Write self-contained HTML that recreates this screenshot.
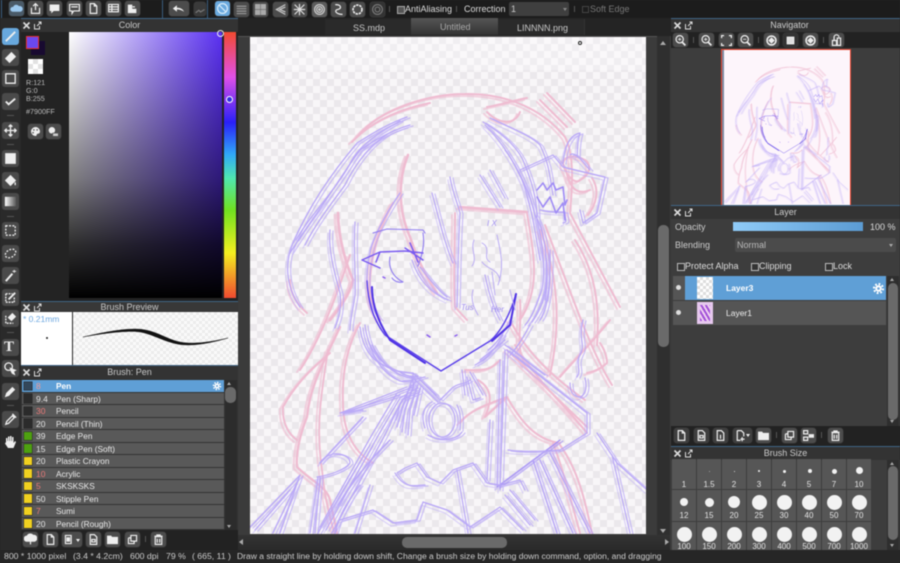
<!DOCTYPE html>
<html><head><meta charset="utf-8"><title>MediBang</title>
<style>
html,body{margin:0;padding:0;background:#262626}
#r{position:relative;width:900px;height:563px;overflow:hidden;background:#262626;font-family:"Liberation Sans",sans-serif;color:#ddd;filter:blur(.4px)}
#r div,#r span.t,#r svg.a{position:absolute}
.t{white-space:nowrap;line-height:12px;font-size:8.5px;position:absolute}
.b{width:15px;height:15px;background:#4c4c4c;border-radius:3px;box-shadow:0 0 0 .5px #3a3a3a}
.b svg{position:absolute;left:1px;top:1px;width:13px;height:13px;fill:none;stroke:#eee;stroke-width:1.5}
.tool{width:17px;height:17px;left:2px;background:#4a4a4a;border-radius:3px}
.tool svg{position:absolute;left:1px;top:1px;width:15px;height:15px;fill:none;stroke:#eee;stroke-width:1.4}
.title{height:13px;background:#333;border-top:1px solid #3f6485}
.title .c{left:0;right:0;top:0;text-align:center;font-size:9px;line-height:13px;color:#c8c8c8}
.x{top:2px;width:9px;height:9px;fill:none;stroke:#ddd;stroke-width:1.6;position:absolute}
.row{left:22px;width:202px;height:11.5px;background:#595959}
.sw{left:2px;top:1.5px;width:8px;height:8.5px;background:#2b2b2b;box-shadow:0 0 0 .5px #222}
.n{left:14px;top:0;line-height:12px;font-size:8.5px;color:#e4e4e4}
.m{left:34px;top:0;line-height:12px;font-size:8.3px;color:#e8e8e8;white-space:nowrap}
.red{color:#ea7a78}
.cell{width:24px;background:#565656}
.dot{background:#f2f2f2;border-radius:50%}
.lb{font-size:8px;line-height:10px;width:24px;text-align:center;color:#e4e4e4}
.cb{width:6px;height:6px;border:1px solid #bbb;background:#333}
</style></head><body>
<div id="r">
<svg width="0" height="0" style="position:absolute"><defs>
<symbol id="doc" viewBox="0 0 16 16"><path d="M4 2h5l3 3v9H4zM9 2v3h3"/></symbol>
<symbol id="folder" viewBox="0 0 16 16"><path d="M2 4h4l1 1.5h7V13H2z" fill="#eee"/></symbol>
<symbol id="copy" viewBox="0 0 16 16"><path d="M6 3h7v7H6zM3 6h3M3 6v7h7v-3"/></symbol>
<symbol id="trash" viewBox="0 0 16 16"><path d="M3 4h10M6 4V2.500h4V4M4 4.500h8V14H4zM6.500 7v5M9.500 7v5"/></symbol>
<symbol id="zoom" viewBox="0 0 16 16"><circle cx="7" cy="6.500" r="4.500"/><path d="M10 10l4 4" stroke-width="2.200"/><path d="M5 6.500h4M7 4.500v4" stroke-width="1"/></symbol>
<symbol id="zoomo" viewBox="0 0 16 16"><circle cx="7" cy="6.500" r="4.500"/><path d="M10 10l4 4" stroke-width="2.200"/><path d="M5 6.500h4" stroke-width="1"/></symbol>
<symbol id="rot" viewBox="0 0 16 16"><circle cx="8" cy="8" r="5.500" stroke-width="2"/><path d="M5 8l3-3 3 3-3 3z" fill="#eee"/></symbol>
<symbol id="gear" viewBox="0 0 16 16"><circle cx="8" cy="8" r="4" fill="#fff" stroke="none"/><circle cx="8" cy="8" r="5.500" fill="none" stroke="#fff" stroke-width="2.600" stroke-dasharray="2.200 2.100"/><circle cx="8" cy="8" r="1.600" fill="#6aa2d6" stroke="none"/></symbol>
<g id="pk" stroke="#efbcd1" stroke-width="2" fill="none" stroke-linecap="round" stroke-linejoin="round">
  <path d="M357 137C380 108 430 94 465 94 510 93 545 112 565 137 575 155 572 190 570 213L620 307"/>
  <path d="M352 142C375 118 405 108 430 103"/>
  <path d="M487 107C500 105 515 100 527 98M487 112C500 125 515 125 520 112"/>
  <path d="M547 93L575 122M540 100L567 127"/>
  <path d="M408 155C398 180 398 210 410 237 418 262 428 280 437 293" stroke-width="2.600"/>
  <path d="M393 203C375 235 368 270 370 295 372 310 378 315 380 320" stroke-width="2.400"/>
  <path d="M338 213C338 235 345 262 353 280 350 295 338 310 330 320" stroke-width="2.800"/>
  <path d="M290 280C290 295 298 305 307 313"/>
  <path d="M460 207L527 212" stroke-width="2.600"/>
  <path d="M455 213C455 250 453 285 455 307L467 320"/>
  <path d="M527 213C535 260 540 290 520 320"/>
  <path d="M563 163C565 175 575 185 580 180 590 175 592 165 585 160 575 155 565 155 563 163Z"/>
  <path d="M566 170C570 190 578 195 590 190M592 178C600 190 596 205 588 215"/>
  <path d="M340 327C325 360 310 385 307 417 298 440 296 455 297 467 310 480 327 487 330 500L337 533" stroke-width="2.300"/>
  <path d="M360 323C345 350 342 380 343 403 343 425 350 450 373 463"/>
  <path d="M283 407C295 385 310 370 330 353M283 407C282 425 290 435 297 440"/>
  <path d="M328 350C320 400 316 430 322 470 325 500 330 520 335 533" stroke-width="1.800"/>
  <path d="M507 350L587 427M515 345C540 385 565 405 587 433"/>
  <path d="M610 320C590 345 570 365 560 377M600 343C605 350 607 358 607 363 600 370 592 372 587 373"/>
  <path d="M553 443C565 475 572 505 580 533M560 445C578 470 585 500 592 533"/>
  <path d="M465 370C480 370 490 372 500 360M520 300C522 330 515 345 525 365" />
  <path d="M478 380C495 390 490 405 485 417L507 397M460 423C470 410 485 405 507 397"/>
  <path d="M507 397C520 420 535 440 560 443"/>
  <path d="M575 240C595 270 600 305 597 345M540 230C560 280 560 330 550 375"/>
  <path d="M510 320C525 350 550 375 585 400"/>
  <path d="M350 255C335 300 320 340 300 370M545 225C570 290 590 350 612 385"/>
</g>
<g id="pu" stroke="#b9a8f7" stroke-width="1.200" fill="none" stroke-linecap="round" stroke-linejoin="round">
  <path d="M407 117C385 125 370 135 357 143 330 175 310 205 293 243 285 262 285 285 300 307"/>
  <path d="M410 125C392 130 375 140 360 150 345 170 330 195 317 213 305 230 295 245 290 253"/>
  <path d="M400 121C380 132 360 145 352 160 340 185 310 215 296 240"/>
  <path d="M395 130C370 142 355 165 345 185 330 205 315 225 305 245"/>
  <path d="M330 230C328 250 335 275 340 293 342 310 338 320 335 328"/>
  <path d="M355 222C353 250 356 275 355 295 353 310 350 320 350 330"/>
  <path d="M400 193C385 215 372 240 370 253 365 275 365 300 380 320"/>
  <path d="M483 122C505 135 520 150 525 165 535 190 537 205 537 220 545 250 545 285 540 295 535 310 530 320 525 325"/>
  <path d="M490 118C510 128 530 135 540 145 550 165 550 180 553 195"/>
  <path d="M485 125C505 145 515 165 522 180 530 200 535 230 540 260"/>
  <path d="M505 150C520 170 530 195 535 215 545 230 550 270 545 300"/>
  <path d="M450 177C452 190 458 205 460 213 458 245 458 275 457 307"/>
  <path d="M432 193C438 215 445 245 453 263"/>
  <path d="M480 175L500 207M490 170L505 198" stroke="#bdaef7"/>
  <path d="M420 267C430 280 440 292 447 297M412 260C420 285 435 295 448 300"/>
  <path d="M520 170L553 155 563 167 605 177 597 213 583 223 580 210"/>
  <path d="M563 163C565 145 570 135 580 133 576 145 578 155 577 157M570 155C575 150 585 165 590 170"/>
  <path d="M540 210C550 212 558 212 565 212 565 220 568 222 563 223"/>
  <path d="M550 250C551 280 548 310 540 320M545 246C548 280 548 300 532 322"/>
  <path d="M485 275C488 290 492 305 500 320"/>
  <path d="M360 327C362 345 370 360 385 366 395 372 405 372 413 373M365 325C367 345 378 365 400 372 405 376 412 377 418 376"/>
  <path d="M368 340C375 362 385 375 400 381 410 382 420 378 425 377M372 345C385 370 400 378 415 378"/>
  <path d="M475 365C485 360 495 350 503 335M488 350C495 345 503 335 510 320M480 360L505 340"/>
  <path d="M250 527L300 475M255 530L290 490M273 533L297 483M280 533L300 475"/>
  <path d="M310 533L318 477M315 533L320 477"/>
  <path d="M317 477C330 475 345 470 350 463 350 455 337 452 330 455 322 458 320 463 320 463"/>
  <path d="M320 527L373 433 397 393 413 387M326 530L378 436 400 398 418 388M332 533L385 435 402 400 420 392M318 533L370 445"/>
  <path d="M338 505C360 470 375 455 390 440M320 463L363 417" stroke-width="1.500"/>
  <path d="M340 413L407 387M345 412L400 395M340 413L363 410"/>
  <path d="M413 377L403 407 397 427M415 382L405 410 402 432M418 385L410 410 408 435M412 385L400 405 396 420M420 388L414 415"/>
  <path d="M413 373L440 400M415 380L438 402M418 378L436 395M413 373L413 390"/>
  <ellipse cx="442" cy="420" rx="13" ry="17"/>
  <path d="M428 435C435 440 455 442 462 432M425 428C420 415 425 405 432 402M457 405C462 415 460 425 460 430"/>
  <path d="M467 377L473 400 480 398M462 370L465 395M470 372L483 395M440 400L452 388C460 382 465 385 470 380"/>
  <path d="M500 360L497 487M505 350L500 490M490 420L487 480"/>
  <path d="M497 487L560 440" stroke="#a591f5"/>
  <path d="M507 350L587 413" stroke-width="1.400"/>
  <path d="M587 413L587 433 560 450M560 450C535 452 520 452 508 450"/>
  <path d="M597 433L617 463 647 490M612 455L630 533"/>
  <path d="M533 460L557 533M540 460L573 533M550 453L590 533" stroke-width="1.500"/>
  <path d="M583 320C578 340 586 345 580 355 575 365 582 370 577 377"/>
  <path d="M570 383C570 395 576 397 580 397 586 395 587 387 585 378"/>
  <path d="M530 325C522 340 515 350 510 355M505 345C520 355 530 365 545 375"/>
  <path d="M397 473L405 468 417 463 427 477 440 483 453 470 473 463 487 483 500 485 520 480 525 490"/>
  <path d="M340 520L373 510 393 523 417 520 423 502 447 510 470 527 500 507 523 530"/>
  <path d="M360 485C345 505 340 515 335 533M370 485L355 533M395 473C405 490 415 485 425 485"/>
  <path d="M457 470L468 533M510 490L535 520M505 495L530 525"/>
</g>
<g id="art" fill="none" stroke-linecap="round" stroke-linejoin="round">
 <use href="#pk"/>
 <use href="#pk" transform="translate(-3 2)" opacity=".6"/>
 <use href="#pu"/>
 <use href="#pu" transform="translate(3 1)" opacity=".7"/>
 <use href="#pu" transform="translate(-2 3)" opacity=".45"/>
 <path d="M373 233L387 229 423 230 425 233M423 233C425 245 422 255 418 266" stroke="#8f7cf0" stroke-width="1.100"/>
 <path d="M362 260L380 252 405 251 423 253M362 260L380 268M380 252L376 262M405 248L423 260M410 243L418 262" stroke="#7a5cf0" stroke-width="1.500"/>
 <path d="M390 257C388 268 393 277 403 282 398 283 394 281 392 278" stroke="#8f7cf0" stroke-width="1.100"/>
 <path d="M537 190L543 183 547 190 553 183 556 190 563 187 565 205 567 200M537 197L543 207 550 197 556 213 563 203 565 220" stroke-width="1.600" stroke="#9f8bf5"/>
 <path d="M367 281C368 300 372 318 385 335L441 371 490 341C500 333 510 315 516 294" stroke="#5a40ea" stroke-width="1.400"/>
 <path d="M372 287C372 305 378 322 390 340L425 363M516 294L510 325 492 341" stroke="#4f33e4" stroke-width="2"/>
 <path d="M427 335L430 337M455 336L457 335M383 277l2 1" stroke="#8a5cf0" stroke-width="1.500"/>
 <g fill="#a08ef0" stroke="none" font-family="Liberation Sans, sans-serif" font-style="italic" font-size="8"><text x="487" y="226">I X</text><text x="461" y="310">Tus</text><text x="491" y="312">Her</text></g>
 <path d="M474 240C470 250 478 258 472 266M482 243C492 248 482 258 490 262M497 235C500 250 505 265 498 285M482 262C488 270 497 268 500 280M492 272L495 295M510 290L515 310M473 290C470 300 475 310 478 315" stroke="#b6a6f5" stroke-width=".9"/>
</g>
</defs></svg>

<!-- top toolbar -->
<div style="left:0;top:0;width:900px;height:18px;background:#1c1c1c"></div>
<div style="left:1px;top:0;width:1px;height:18px;background:#3a5c7c"></div>
<div style="left:162px;top:0;width:1px;height:18px;background:#3a5c7c"></div>
<div style="left:207px;top:0;width:1px;height:18px;background:#3a5c7c"></div>
<div class="b" style="left:9px;top:1px;background:#4a5a68"><svg viewBox="0 0 16 16"><path d="M3 12a3 3 0 0 1 1-6 4 4 0 0 1 7-1 3.500 3.500 0 0 1 2 7z" fill="#9cc8ee" stroke="none"/></svg></div>
<div class="b" style="left:28px;top:1px"><svg viewBox="0 0 16 16"><path d="M3 7v7h10V7M8 10V2M5 5l3-3 3 3"/></svg></div>
<div class="b" style="left:47px;top:1px"><svg viewBox="0 0 16 16"><path d="M2 3h12v8H7l-3 3v-3H2z" fill="#eee" stroke="none"/></svg></div>
<div class="b" style="left:67px;top:1px"><svg viewBox="0 0 16 16"><path d="M2 3h12v8H7l-2 3v-3H2zM4 6h8" /></svg></div>
<div class="b" style="left:86px;top:1px"><svg><use href="#doc"/></svg></div>
<div class="b" style="left:106px;top:1px"><svg viewBox="0 0 16 16"><path d="M2 3h12v9H2zM2 6h12M6 3v9M2 9h12"/></svg></div>
<div class="b" style="left:125px;top:1px"><svg viewBox="0 0 16 16"><path d="M3 4h4v4H3zM3 9h4v4H3zM8 9h4v4H8zM8 6h3" fill="#eee"/></svg></div>
<div class="b" style="left:169px;top:1px;width:20px"><svg viewBox="0 0 16 16" style="left:3px"><path d="M15 12C13 8 10 7 6 7V4L1 8l5 4V9c3 0 6 1 9 3z" fill="#eee" stroke="none"/></svg></div>
<div class="b" style="left:194px;top:2px;width:12px;height:14px;background:#3a3a3a"><svg viewBox="0 0 16 16" style="left:0;stroke:#777"><path d="M2 12l4-3 2 2 5-3"/></svg></div>
<div class="b" style="left:215px;top:1px;background:#6aa9de"><svg viewBox="0 0 16 16" style="stroke:#d8ecfa"><circle cx="8" cy="8" r="6"/><path d="M4 4l8 8"/></svg></div>
<div class="b" style="left:234px;top:2px"><svg viewBox="0 0 16 16" style="stroke:#999"><path d="M2 4h12M2 7h12M2 10h12M2 13h12"/></svg></div>
<div class="b" style="left:253px;top:2px"><svg viewBox="0 0 16 16" style="stroke:#aaa"><path d="M2 2h5v5H2zM9 2h5v5H9zM2 9h5v5H2zM9 9h5v5H9z" fill="#aaa"/></svg></div>
<div class="b" style="left:273px;top:2px"><svg viewBox="0 0 16 16" style="stroke:#ccc"><path d="M14 2L3 8l11 6M14 5L7 8l7 3"/></svg></div>
<div class="b" style="left:292px;top:2px"><svg viewBox="0 0 16 16" style="stroke:#ddd"><path d="M2 2l12 12M14 2L2 14M8 1v14M1 8h14"/></svg></div>
<div class="b" style="left:312px;top:2px;background:#5c5c5c"><svg viewBox="0 0 16 16" style="stroke:#ccc"><circle cx="8" cy="8" r="6"/><circle cx="8" cy="8" r="3.500"/><circle cx="8" cy="8" r="1"/></svg></div>
<div class="b" style="left:331px;top:2px"><svg viewBox="0 0 16 16"><path d="M4 2c8 0 8 5 3 6s-2 6 6 6" /></svg></div>
<div class="b" style="left:350px;top:2px"><svg viewBox="0 0 16 16" stroke-dasharray="3 1"><circle cx="8" cy="8" r="5.500" stroke-width="2"/></svg></div>
<div class="b" style="left:370px;top:2px;background:#333"><svg viewBox="0 0 16 16" style="stroke:#777"><circle cx="8" cy="8" r="6"/><circle cx="8" cy="8" r="3"/></svg></div>
<div style="left:389px;top:6px;width:1px;height:6px;background:#555"></div>
<div style="left:397px;top:6px;width:6px;height:6px;border:1px solid #aaa;background:#555"></div>
<span class="t" style="left:405px;top:3px;font-size:9px;color:#ddd">AntiAliasing</span>
<div style="left:456px;top:6px;width:1px;height:6px;background:#555"></div>
<span class="t" style="left:464px;top:3px;font-size:9px;color:#ddd">Correction</span>
<div style="left:509px;top:2px;width:60px;height:14px;background:#3f3f3f;border-radius:2px"></div>
<span class="t" style="left:511px;top:3px;font-size:9px;color:#ccc">1</span>
<div style="left:563px;top:8px;border:2.500px solid transparent;border-top:3px solid #888"></div>
<div style="left:574px;top:6px;width:1px;height:6px;background:#555"></div>
<div style="left:582px;top:6px;width:5px;height:5px;border:1px solid #444"></div>
<span class="t" style="left:590px;top:3px;font-size:9px;color:#777">Soft Edge</span>

<!-- canvas area -->
<div style="left:238px;top:18px;width:433px;height:532px;background:#3b3b3b"></div>
<div style="left:238px;top:18px;width:433px;height:18px;background:#242424"></div>
<div style="left:325px;top:19px;width:86px;height:16px;background:#2a2a2a;border-right:1px solid #222"></div>
<div style="left:411px;top:18px;width:87px;height:17px;background:linear-gradient(#555,#333)"></div>
<div style="left:498px;top:19px;width:86px;height:16px;background:#2a2a2a;border-right:1px solid #333"></div>
<span class="t" style="left:353px;top:22px;color:#c8c8c8;font-size:9px">SS.mdp</span>
<span class="t" style="left:440px;top:21px;color:#aaa;font-size:9px">Untitled</span>
<span class="t" style="left:517px;top:22px;color:#c8c8c8;font-size:9px">LINNNN.png</span>
<div style="left:238px;top:36px;width:432px;height:1px;background:#555"></div>
<div style="left:250px;top:37px;width:396px;height:497px;background:repeating-conic-gradient(#ebe8ec 0 25%,#f8f6f8 0 50%) 0 0/14px 14px"></div>
<div style="left:250px;top:37px;width:396px;height:33px;background:rgba(255,255,255,.25)"></div>
<svg class="a" style="left:250px;top:37px" width="396" height="497" viewBox="250 37 396 497"><use href="#art"/></svg>
<div style="left:578px;top:41px;width:2px;height:2px;border:1px solid #222;border-radius:50%;background:#fff"></div>
<div style="left:657px;top:36px;width:13px;height:499px;background:#2f2f2f"></div>
<div style="left:660px;top:38px;border:3px solid transparent;border-bottom:4px solid #aaa"></div>
<div style="left:658px;top:225px;width:11px;height:122px;background:#6a6a6a;border-radius:5px"></div>
<div style="left:660px;top:529px;border:3px solid transparent;border-top:4px solid #aaa"></div>
<div style="left:238px;top:535px;width:432px;height:15px;background:linear-gradient(#333,#2a2a2a)"></div>
<div style="left:402px;top:537px;width:105px;height:11px;background:#6a6a6a;border-radius:5px"></div>
<div style="left:239px;top:539px;border:3px solid transparent;border-right:4px solid #aaa;margin-left:-3px"></div>
<div style="left:665px;top:539px;border:3px solid transparent;border-left:4px solid #aaa"></div>

<!-- left tool column -->
<div style="left:0;top:18px;width:21px;height:532px;background:#2a2a2a"></div>
<div class="tool" style="top:28px;background:#68a8dd"><svg viewBox="0 0 16 16"><path d="M3 13l2-2L13 3" stroke-width="2"/></svg></div>
<div class="tool" style="top:49px"><svg viewBox="0 0 16 16"><path d="M3 9l6-6 4 4-6 6z" fill="#eee"/></svg></div>
<div class="tool" style="top:70px"><svg viewBox="0 0 16 16"><path d="M3 3h10v10H3z"/></svg></div>
<div class="tool" style="top:93px"><svg viewBox="0 0 16 16"><path d="M3 8l3 3 7-6" stroke-width="2"/></svg></div>
<div style="left:7px;top:115px;width:7px;height:1px;background:#555"></div>
<div class="tool" style="top:122px"><svg viewBox="0 0 16 16"><path d="M8 2v12M2 8h12M6 4l2-2 2 2M6 12l2 2 2-2M4 6L2 8l2 2M12 6l2 2-2 2"/></svg></div>
<div style="left:7px;top:144px;width:7px;height:1px;background:#555"></div>
<div class="tool" style="top:150px"><svg viewBox="0 0 16 16"><path d="M3 3h10v10H3z" fill="#eee"/></svg></div>
<div class="tool" style="top:172px"><svg viewBox="0 0 16 16"><path d="M3 8l5-5 5 5-5 5z" fill="#eee"/><path d="M13 10v3"/></svg></div>
<div class="tool" style="top:193px"><svg viewBox="0 0 16 16" style="stroke:none"><defs><linearGradient id="gr"><stop offset="0" stop-color="#fff"/><stop offset="1" stop-color="#555"/></linearGradient></defs><rect x="2" y="3" width="12" height="10" fill="url(#gr)"/></svg></div>
<div style="left:7px;top:216px;width:7px;height:1px;background:#555"></div>
<div class="tool" style="top:222px"><svg viewBox="0 0 16 16"><path d="M3 3h10v10H3z" stroke-dasharray="2 1.500"/></svg></div>
<div class="tool" style="top:245px"><svg viewBox="0 0 16 16"><ellipse cx="8" cy="8" rx="6" ry="4" transform="rotate(-30 8 8)" stroke-dasharray="2 1.500"/></svg></div>
<div class="tool" style="top:267px"><svg viewBox="0 0 16 16"><path d="M3 14L10 6" stroke-width="2.200"/><path d="M12 2v3M10 3.500h4" stroke-width="1"/></svg></div>
<div class="tool" style="top:289px"><svg viewBox="0 0 16 16"><path d="M3 4h7M3 4v9h9V8" stroke-dasharray="2 1"/><path d="M6 10l7-7" stroke-width="2"/></svg></div>
<div class="tool" style="top:310px"><svg viewBox="0 0 16 16"><path d="M3 5v8h8" stroke-dasharray="2 1"/><path d="M6 7l4-4 3 3-4 4z" fill="#eee"/></svg></div>
<div style="left:7px;top:332px;width:7px;height:1px;background:#555"></div>
<div class="tool" style="top:339px"><span class="t" style="left:2px;top:2px;font-family:'Liberation Serif',serif;font-weight:bold;font-size:15px;color:#eee">T</span></div>
<div class="tool" style="top:360px"><svg viewBox="0 0 16 16"><circle cx="6" cy="6" r="4"/><path d="M8 8l5 2-2 1 1 3-2-1-1-2z" fill="#eee"/></svg></div>
<div class="tool" style="top:383px"><svg viewBox="0 0 16 16"><path d="M3 13l1-3 6-6 2 2-6 6z" fill="#eee"/></svg></div>
<div style="left:7px;top:405px;width:7px;height:1px;background:#555"></div>
<div class="tool" style="top:411px"><svg viewBox="0 0 16 16"><path d="M3 13l1-3 6-6 2 2-6 6zM10 2l4 4"/></svg></div>
<svg class="a" style="left:3px;top:434px;fill:#eee" width="15" height="16" viewBox="0 0 15 16"><path d="M3 8V4h1.500v3h.5V2.500h1.500V7h.5V2H8.500v5H9V3h1.500v6l1.500-2 1 1-2.500 6H5L2 9.500z"/></svg>

<!-- color panel -->
<div style="left:21px;top:18px;width:217px;height:283px;background:#232323"></div>
<div class="title" style="left:21px;top:18px;width:217px"><span class="c" style="position:absolute">Color</span>
<svg class="x" style="left:1px" viewBox="0 0 9 9"><path d="M1.500 1.500l6 6M7.500 1.500l-6 6"/></svg><svg class="x" style="left:12px;stroke-width:1" viewBox="0 0 9 9"><path d="M1.500 3v5h5V5M4 5l4-4M5.500 1H8v2.500"/></svg></div>
<div style="left:31px;top:41px;width:14px;height:14px;background:#180a30"></div>
<div style="left:26px;top:36px;width:11px;height:11px;background:#6a48f0;border:1.500px solid #e83030"></div>
<div style="left:28px;top:59px;width:15px;height:15px;background:repeating-conic-gradient(#e2e2e2 0 25%,#fff 0 50%) 0 0/10px 10px"></div>
<span class="t" style="left:26px;top:77px;font-size:7.200px;color:#bbb">R:121</span>
<span class="t" style="left:26px;top:85px;font-size:7.200px;color:#bbb">G:0</span>
<span class="t" style="left:26px;top:93px;font-size:7.200px;color:#bbb">B:255</span>
<span class="t" style="left:26px;top:106px;font-size:7.200px;color:#bbb">#7900FF</span>
<div class="b" style="left:28px;top:124px"><svg viewBox="0 0 16 16"><path d="M8 2.500a5.500 5.500 0 1 0 0 11c2 0 1-2 2-2.500 2-.5 3.500-.5 3.500-3 0-3-2.500-5.500-5.500-5.500z" fill="#eee" stroke="none"/><circle cx="6" cy="6" r="1" fill="#555" stroke="none"/><circle cx="10" cy="6" r="1" fill="#555" stroke="none"/><circle cx="5" cy="9.500" r="1" fill="#555" stroke="none"/></svg></div>
<div class="b" style="left:46px;top:124px"><svg viewBox="0 0 16 16"><circle cx="6" cy="6.500" r="4" fill="#eee" stroke="none"/><path d="M7 10h7v4H7z" fill="#ccc" stroke="#555" stroke-width="1"/></svg></div>
<div style="left:69px;top:32px;width:153px;height:266px;background:linear-gradient(to bottom,rgba(0,0,0,0),rgba(0,0,0,.5) 55%,rgba(0,0,0,.82) 80%,#000),linear-gradient(to right,#fff,#5a30f2)"></div>
<div style="left:217px;top:30px;width:5px;height:5px;border:1px solid #eee;border-radius:50%"></div>
<div style="left:224px;top:32px;width:12px;height:266px;background:linear-gradient(#f24a30,#e050e8 17%,#2a20f8 34%,#30a8f8 46%,#50e8b0 55%,#70e020 67%,#f4f020 83%,#f04a30)"></div>
<div style="left:226px;top:96px;width:5px;height:5px;border:1.500px solid #fff;border-radius:50%;background:#3030e0"></div>

<!-- brush preview -->
<div class="title" style="left:21px;top:301px;width:217px;height:10px;background:#383838"><span class="c" style="position:absolute;line-height:11px">Brush Preview</span>
<svg class="x" style="left:1px;top:1px" viewBox="0 0 9 9"><path d="M1.500 1.500l6 6M7.500 1.500l-6 6"/></svg><svg class="x" style="left:12px;top:1px;stroke-width:1" viewBox="0 0 9 9"><path d="M1.500 3v5h5V5M4 5l4-4M5.500 1H8v2.500"/></svg></div>
<div style="left:21px;top:312px;width:51px;height:53px;background:#fff"></div>
<span class="t" style="left:23px;top:313px;color:#6ea8e0;font-size:8.500px">* 0.21mm</span>
<div style="left:46px;top:337px;width:2px;height:2px;background:#222;border-radius:50%"></div>
<div style="left:73px;top:312px;width:165px;height:53px;background:repeating-conic-gradient(#ececec 0 25%,#fafafa 0 50%) 0 0/6px 6px"></div>
<svg class="a" style="left:0;top:300px" width="240" height="60" viewBox="0 300 240 60"><path d="M83 337C100 333 120 329 135 329 155 329 165 339 180 342 195 345 215 341 228 338 215 342 195 346.500 180 344.500 163 342 150 332 135 331.500 120 331 100 334 83 337Z" fill="#111" stroke="#111" stroke-width=".4"/></svg>

<!-- brush list -->
<div style="left:21px;top:365px;width:217px;height:185px;background:#333"></div>
<div class="title" style="left:21px;top:365px;width:217px"><span class="c" style="position:absolute">Brush: Pen</span>
<svg class="x" style="left:1px" viewBox="0 0 9 9"><path d="M1.500 1.500l6 6M7.500 1.500l-6 6"/></svg><svg class="x" style="left:12px;stroke-width:1" viewBox="0 0 9 9"><path d="M1.500 3v5h5V5M4 5l4-4M5.500 1H8v2.500"/></svg></div>
<div class="row" style="top:380px;background:#5f9fd6"><div class="sw" style="background:#33475a"></div><div class="n" style="color:#f29a94">8</div><div class="m" style="font-weight:bold;color:#fff">Pen</div><svg class="a" style="left:190px;top:1px" width="10" height="10" viewBox="0 0 16 16"><use href="#gear"/></svg></div>
<div class="row" style="top:392.500px"><div class="sw"></div><div class="n">9.4</div><div class="m">Pen (Sharp)</div></div>
<div class="row" style="top:405px"><div class="sw"></div><div class="n red">30</div><div class="m">Pencil</div></div>
<div class="row" style="top:417.500px"><div class="sw"></div><div class="n">20</div><div class="m">Pencil (Thin)</div></div>
<div class="row" style="top:430px"><div class="sw" style="background:#4ea010"></div><div class="n">39</div><div class="m">Edge Pen</div></div>
<div class="row" style="top:442.500px"><div class="sw" style="background:#4ea010"></div><div class="n">15</div><div class="m">Edge Pen (Soft)</div></div>
<div class="row" style="top:455px"><div class="sw" style="background:#f0d020"></div><div class="n">20</div><div class="m">Plastic Crayon</div></div>
<div class="row" style="top:467.500px"><div class="sw" style="background:#f0d020"></div><div class="n red">10</div><div class="m">Acrylic</div></div>
<div class="row" style="top:480px"><div class="sw" style="background:#f0d020"></div><div class="n red">5</div><div class="m">SKSKSKS</div></div>
<div class="row" style="top:492.500px"><div class="sw" style="background:#f0d020"></div><div class="n">50</div><div class="m">Stipple Pen</div></div>
<div class="row" style="top:505px"><div class="sw" style="background:#f0d020"></div><div class="n red">7</div><div class="m">Sumi</div></div>
<div class="row" style="top:517.500px"><div class="sw" style="background:#f0d020"></div><div class="n">20</div><div class="m">Pencil (Rough)</div></div>
<div style="left:225px;top:380px;width:12px;height:150px;background:#2c2c2c"></div>
<div style="left:225px;top:387px;width:11px;height:16px;background:#6a6a6a;border-radius:5px"></div>
<div style="left:227px;top:380px;border:2.500px solid transparent;border-bottom:3.500px solid #aaa"></div>
<div style="left:227px;top:525px;border:2.500px solid transparent;border-top:3.500px solid #aaa"></div>
<div style="left:21px;top:530px;width:217px;height:20px;background:#222"></div>
<div class="b" style="left:23px;top:532px"><svg viewBox="0 0 16 16"><path d="M3 10a3 3 0 0 1 1-6 4 4 0 0 1 7-1 3.500 3.500 0 0 1 2 7zM8 8v6" fill="#eee"/></svg></div>
<div class="b" style="left:43px;top:532px"><svg><use href="#doc"/></svg></div>
<div class="b" style="left:62px;top:532px;width:20px"><svg viewBox="0 0 16 16"><path d="M3 3h7v10H3z"/><path d="M5 6h3v4H5z" fill="#eee"/></svg><div style="left:14px;top:7px;border:2.500px solid transparent;border-top:3px solid #eee"></div></div>
<div class="b" style="left:86px;top:532px"><svg viewBox="0 0 16 16"><path d="M4 2h5l3 3v9H4zM6 8h4v3H6z"/></svg></div>
<div class="b" style="left:105px;top:532px"><svg><use href="#folder"/></svg></div>
<div class="b" style="left:125px;top:532px"><svg><use href="#copy"/></svg></div>
<div style="left:145px;top:536px;width:1px;height:6px;background:#555"></div>
<div class="b" style="left:151px;top:532px"><svg><use href="#trash"/></svg></div>

<!-- navigator -->
<div style="left:671px;top:18px;width:229px;height:188px;background:#3d3d3d"></div>
<div class="title" style="left:671px;top:18px;width:229px"><span class="c" style="position:absolute;left:4px;width:229px;right:auto;color:#ccc">Navigator</span>
<svg class="x" style="left:2px" viewBox="0 0 9 9"><path d="M1.500 1.500l6 6M7.500 1.500l-6 6"/></svg><svg class="x" style="left:13px;stroke-width:1" viewBox="0 0 9 9"><path d="M1.500 3v5h5V5M4 5l4-4M5.500 1H8v2.500"/></svg></div>
<div style="left:671px;top:32px;width:229px;height:16px;background:#222"></div>
<div class="b" style="left:673px;top:33px;height:14px"><svg><use href="#zoom"/></svg></div>
<div style="left:693px;top:37px;width:1px;height:6px;background:#555"></div>
<div class="b" style="left:699px;top:33px;height:14px"><svg><use href="#zoom"/></svg></div>
<div class="b" style="left:719px;top:33px;height:14px"><svg viewBox="0 0 16 16"><path d="M2 5V2h3M11 2h3v3M14 11v3h-3M5 14H2v-3"/></svg></div>
<div class="b" style="left:738px;top:33px;height:14px"><svg><use href="#zoomo"/></svg></div>
<div style="left:758px;top:37px;width:1px;height:6px;background:#555"></div>
<div class="b" style="left:764px;top:33px;height:14px"><svg><use href="#rot"/></svg></div>
<div class="b" style="left:783px;top:33px;height:14px;background:#333"><svg viewBox="0 0 16 16"><path d="M4 4h8v8H4z" fill="#ddd"/></svg></div>
<div class="b" style="left:803px;top:33px;height:14px"><svg><use href="#rot"/></svg></div>
<div style="left:823px;top:37px;width:1px;height:6px;background:#555"></div>
<div class="b" style="left:829px;top:33px;height:14px"><svg viewBox="0 0 16 16"><path d="M3 8h5v6H3zM9 5h4v9H9zM5 8V4a3 3 0 0 1 6 0" /></svg></div>
<div style="left:721px;top:49px;width:128px;height:155px;background:#fdf5fb;border:1px solid #e8402c"></div>
<div style="left:722px;top:50px;width:2px;height:155px;background:#7a8aa0"></div>
<svg class="a" style="left:724px;top:49px;opacity:.85" width="124" height="155" viewBox="250 37 396 497" preserveAspectRatio="none"><use href="#art"/></svg>

<!-- layer -->
<div style="left:671px;top:205px;width:229px;height:241px;background:#3d3d3d"></div>
<div class="title" style="left:671px;top:205px;width:229px"><span class="c" style="position:absolute;color:#ccc">Layer</span>
<svg class="x" style="left:2px" viewBox="0 0 9 9"><path d="M1.500 1.500l6 6M7.500 1.500l-6 6"/></svg><svg class="x" style="left:13px;stroke-width:1" viewBox="0 0 9 9"><path d="M1.500 3v5h5V5M4 5l4-4M5.500 1H8v2.500"/></svg></div>
<span class="t" style="left:675px;top:221px;font-size:9px;color:#ccc">Opacity</span>
<div style="left:733px;top:222px;width:130px;height:9px;background:linear-gradient(to right,#8fcbf8,#5b9bd3)"></div>
<span class="t" style="left:870px;top:221px;font-size:9px;color:#ddd">100 %</span>
<span class="t" style="left:675px;top:239px;font-size:9px;color:#ccc">Blending</span>
<div style="left:735px;top:238px;width:161px;height:14px;background:#4b4b4b;border-radius:2px"></div>
<span class="t" style="left:737px;top:239px;font-size:9px;color:#bbb">Normal</span>
<div style="left:889px;top:244px;border:2.500px solid transparent;border-top:3px solid #aaa"></div>
<div class="cb" style="left:677px;top:263px"></div><span class="t" style="left:685px;top:260px;font-size:9px;color:#ddd">Protect Alpha</span>
<div class="cb" style="left:751px;top:263px"></div><span class="t" style="left:759px;top:260px;font-size:9px;color:#ddd">Clipping</span>
<div class="cb" style="left:825px;top:263px"></div><span class="t" style="left:833px;top:260px;font-size:9px;color:#ddd">Lock</span>
<div style="left:673px;top:276px;width:12px;height:24px;background:#555"></div>
<div style="left:685px;top:276px;width:201px;height:24px;background:#5f9fd6"></div>
<div style="left:697px;top:277px;width:16px;height:22px;background:repeating-conic-gradient(#ddd 0 25%,#fff 0 50%) 0 0/6px 6px"></div>
<span class="t" style="left:726px;top:282px;font-size:8.500px;font-weight:bold;color:#fff">Layer3</span>
<svg class="a" style="left:872px;top:282px" width="13" height="13" viewBox="0 0 16 16"><use href="#gear"/></svg>
<div style="left:676px;top:285px;width:5px;height:5px;background:#ddd;border-radius:50%"></div>
<div style="left:673px;top:301px;width:213px;height:24px;background:#555"></div>
<div style="left:697px;top:302px;width:16px;height:22px;background:#e6c8ee;overflow:hidden"><div style="left:3px;top:3px;width:10px;height:16px;background:repeating-linear-gradient(60deg,#a050d8 0 2px,#efd0f0 2px 4px)"></div></div>
<span class="t" style="left:726px;top:307px;font-size:8.500px;color:#eee">Layer1</span>
<div style="left:676px;top:310px;width:5px;height:5px;background:#ddd;border-radius:50%"></div>
<div style="left:887px;top:276px;width:12px;height:150px;background:#2e2e2e"></div>
<div style="left:888px;top:283px;width:10px;height:137px;background:#6a6a6a;border-radius:5px"></div>
<div style="left:890px;top:276px;border:2.500px solid transparent;border-bottom:3.500px solid #aaa"></div>
<div style="left:890px;top:420px;border:2.500px solid transparent;border-top:3.500px solid #aaa"></div>
<div style="left:671px;top:426px;width:229px;height:21px;background:#222"></div>
<div class="b" style="left:674px;top:428px;background:#3f3f3f"><svg><use href="#doc"/></svg></div>
<div class="b" style="left:694px;top:428px;background:#3f3f3f"><svg viewBox="0 0 16 16"><path d="M4 2h5l3 3v9H4zM6 8h4v3H6z"/></svg></div>
<div class="b" style="left:713px;top:428px;background:#3f3f3f"><svg viewBox="0 0 16 16"><path d="M4 2h5l3 3v9H4zM8 7v5"/></svg></div>
<div class="b" style="left:733px;top:428px;width:19px;background:#3f3f3f"><svg viewBox="0 0 16 16"><path d="M4 2h5l3 3v4M4 2v12h4M10 10v5M8 12.500h5"/></svg><div style="left:13px;top:6px;border:2.500px solid transparent;border-top:3px solid #eee"></div></div>
<div class="b" style="left:756px;top:428px"><svg><use href="#folder"/></svg></div>
<div style="left:776px;top:432px;width:1px;height:6px;background:#555"></div>
<div class="b" style="left:782px;top:428px"><svg><use href="#copy"/></svg></div>
<div class="b" style="left:801px;top:428px"><svg viewBox="0 0 16 16"><path d="M2 2h5v4H2zM2 10h5v4H2z"/><path d="M9 7h5v3H9z" fill="#eee"/></svg></div>
<div style="left:821px;top:432px;width:1px;height:6px;background:#555"></div>
<div class="b" style="left:828px;top:428px"><svg><use href="#trash"/></svg></div>

<!-- brush size -->
<div style="left:671px;top:446px;width:229px;height:104px;background:#3d3d3d"></div>
<div class="title" style="left:671px;top:446px;width:229px"><span class="c" style="position:absolute;color:#ccc">Brush Size</span>
<svg class="x" style="left:2px" viewBox="0 0 9 9"><path d="M1.500 1.500l6 6M7.500 1.500l-6 6"/></svg><svg class="x" style="left:13px;stroke-width:1" viewBox="0 0 9 9"><path d="M1.500 3v5h5V5M4 5l4-4M5.500 1H8v2.500"/></svg></div>
<div style="left:887px;top:460px;width:12px;height:90px;background:#2e2e2e"></div>
<div style="left:888px;top:466px;width:10px;height:74px;background:#6a6a6a;border-radius:5px"></div>
<div style="left:890px;top:460px;border:2.500px solid transparent;border-bottom:3.500px solid #aaa"></div>
<div style="left:890px;top:544px;border:2.500px solid transparent;border-top:3.500px solid #aaa"></div>

<div class="cell" style="left:672px;top:459px;height:30px"></div><div class="cell" style="left:697px;top:459px;height:30px"></div><div class="cell" style="left:722px;top:459px;height:30px"></div><div class="cell" style="left:747px;top:459px;height:30px"></div><div class="cell" style="left:772px;top:459px;height:30px"></div><div class="cell" style="left:797px;top:459px;height:30px"></div><div class="cell" style="left:822px;top:459px;height:30px"></div><div class="cell" style="left:847px;top:459px;height:30px"></div>
<div class="cell" style="left:672px;top:490px;height:31px"></div><div class="cell" style="left:697px;top:490px;height:31px"></div><div class="cell" style="left:722px;top:490px;height:31px"></div><div class="cell" style="left:747px;top:490px;height:31px"></div><div class="cell" style="left:772px;top:490px;height:31px"></div><div class="cell" style="left:797px;top:490px;height:31px"></div><div class="cell" style="left:822px;top:490px;height:31px"></div><div class="cell" style="left:847px;top:490px;height:31px"></div>
<div class="cell" style="left:672px;top:522px;height:28px"></div><div class="cell" style="left:697px;top:522px;height:28px"></div><div class="cell" style="left:722px;top:522px;height:28px"></div><div class="cell" style="left:747px;top:522px;height:28px"></div><div class="cell" style="left:772px;top:522px;height:28px"></div><div class="cell" style="left:797px;top:522px;height:28px"></div><div class="cell" style="left:822px;top:522px;height:28px"></div><div class="cell" style="left:847px;top:522px;height:28px"></div>

<div class="dot" style="left:708.500px;top:470.500px;width:1px;height:1px;opacity:.6"></div>
<div class="dot" style="left:733.500px;top:470.500px;width:1.500px;height:1.500px"></div>
<div class="dot" style="left:758px;top:470px;width:2px;height:2px"></div>
<div class="dot" style="left:782.500px;top:469.500px;width:3px;height:3px"></div>
<div class="dot" style="left:807.500px;top:469px;width:4px;height:4px"></div>
<div class="dot" style="left:831.500px;top:468.500px;width:5px;height:5px"></div>
<div class="dot" style="left:855.500px;top:467px;width:7px;height:7px"></div>

<div class="dot" style="left:680px;top:498px;width:8px;height:8px"></div>
<div class="dot" style="left:704.500px;top:497.500px;width:9px;height:9px"></div>
<div class="dot" style="left:727.500px;top:496px;width:12px;height:12px"></div>
<div class="dot" style="left:751.500px;top:494.500px;width:15px;height:15px"></div>
<div class="dot" style="left:776.500px;top:494.500px;width:15px;height:15px"></div>
<div class="dot" style="left:801.500px;top:494.500px;width:15px;height:15px"></div>
<div class="dot" style="left:826.500px;top:494.500px;width:15px;height:15px"></div>
<div class="dot" style="left:851.500px;top:494.500px;width:15px;height:15px"></div>

<div class="dot" style="left:676.500px;top:526.500px;width:15px;height:15px"></div>
<div class="dot" style="left:701.500px;top:526.500px;width:15px;height:15px"></div>
<div class="dot" style="left:726.500px;top:526.500px;width:15px;height:15px"></div>
<div class="dot" style="left:751.500px;top:526.500px;width:15px;height:15px"></div>
<div class="dot" style="left:776.500px;top:526.500px;width:15px;height:15px"></div>
<div class="dot" style="left:801.500px;top:526.500px;width:15px;height:15px"></div>
<div class="dot" style="left:826.500px;top:526.500px;width:15px;height:15px"></div>
<div class="dot" style="left:851.500px;top:526.500px;width:15px;height:15px"></div>

<div class="lb" style="left:672px;top:480px">1</div><div class="lb" style="left:697px;top:480px">1.5</div><div class="lb" style="left:722px;top:480px">2</div><div class="lb" style="left:747px;top:480px">3</div><div class="lb" style="left:772px;top:480px">4</div><div class="lb" style="left:797px;top:480px">5</div><div class="lb" style="left:822px;top:480px">7</div><div class="lb" style="left:847px;top:480px">10</div>
<div class="lb" style="left:672px;top:511px">12</div><div class="lb" style="left:697px;top:511px">15</div><div class="lb" style="left:722px;top:511px">20</div><div class="lb" style="left:747px;top:511px">25</div><div class="lb" style="left:772px;top:511px">30</div><div class="lb" style="left:797px;top:511px">40</div><div class="lb" style="left:822px;top:511px">50</div><div class="lb" style="left:847px;top:511px">70</div>
<div class="lb" style="left:672px;top:542px">100</div><div class="lb" style="left:697px;top:542px">150</div><div class="lb" style="left:722px;top:542px">200</div><div class="lb" style="left:747px;top:542px">300</div><div class="lb" style="left:772px;top:542px">400</div><div class="lb" style="left:797px;top:542px">500</div><div class="lb" style="left:822px;top:542px">700</div><div class="lb" style="left:847px;top:542px">1000</div>

<!-- status bar -->
<div style="left:0;top:550px;width:900px;height:13px;background:#262626"></div>
<span class="t" style="left:4px;top:550px;font-size:8.700px;color:#ccc">800 * 1000 pixel</span>
<span class="t" style="left:73px;top:550px;font-size:8.700px;color:#ccc">(3.4 * 4.2cm)</span>
<span class="t" style="left:130px;top:550px;font-size:8.700px;color:#ccc">600 dpi</span>
<span class="t" style="left:166px;top:550px;font-size:8.700px;color:#ccc">79 %</span>
<span class="t" style="left:192px;top:550px;font-size:8.700px;color:#ccc">( 665, 11 )</span>
<span class="t" style="left:237px;top:550px;font-size:8.540px;color:#ccc">Draw a straight line by holding down shift, Change a brush size by holding down command, option, and dragging</span>
</div>
</body></html>
